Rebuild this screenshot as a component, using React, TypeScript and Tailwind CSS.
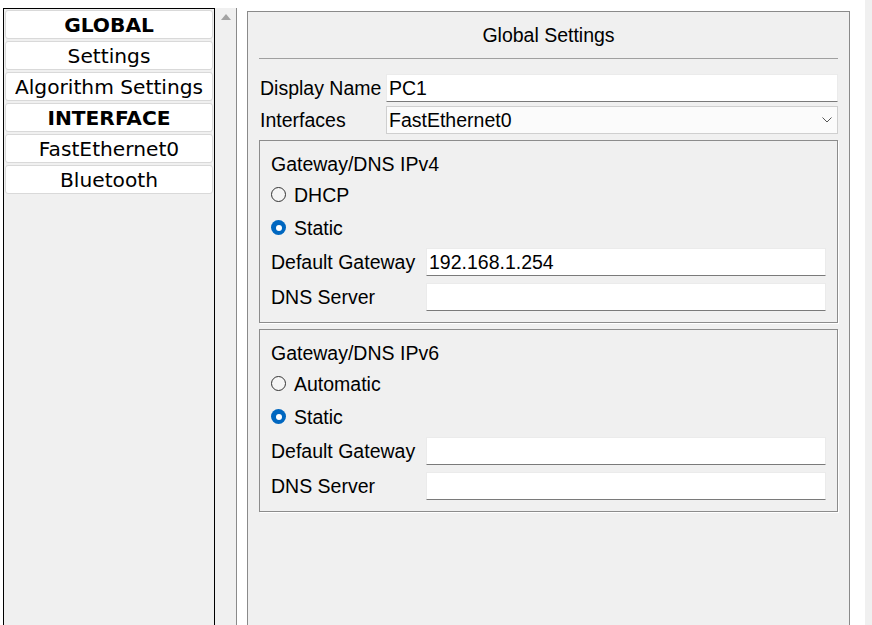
import React from "react";

const sans = { fontFamily: '"Liberation Sans", Arial, sans-serif' };
const verdana = { fontFamily: '"DejaVu Sans", Verdana, sans-serif' };

function NavButton({ label, bold }: { label: string; bold?: boolean }) {
  return (
    <div
      className={`h-[29px] rounded-[3px] border border-[#d9d9d9] bg-white flex items-center justify-center pt-[2px] text-[20.2px] leading-none text-black ${bold ? "font-bold" : ""}`}
      style={verdana}
    >
      {label}
    </div>
  );
}

function TextInput({ value }: { value?: string }) {
  return (
    <div className="flex-1 h-[28px] bg-white border border-[#ebebeb] border-b-[#7a7a7a] flex items-center pl-[2px] pt-[2px] text-[19.5px] leading-none text-black">
      {value}
    </div>
  );
}

function Radio({ checked, label }: { checked?: boolean; label: string }) {
  return (
    <div className="h-[33px] flex items-center">
      {checked ? (
        <div className="w-[15px] h-[15px] rounded-full bg-[#0067c0] flex items-center justify-center">
          <div className="w-[6px] h-[6px] rounded-full bg-white" />
        </div>
      ) : (
        <div className="w-[15px] h-[15px] rounded-full border border-[#333333] bg-[#f5f5f5]" />
      )}
      <span className="ml-[8px] pt-[2px] text-[19.5px] leading-none text-black">{label}</span>
    </div>
  );
}

function GroupBox({ title, opt1, ip }: { title: string; opt1: string; ip?: string }) {
  return (
    <div className="border border-[#8c8c8c] shadow-[1px_1px_0_#ffffff] pl-[11px] pr-[11px] pt-[9px] pb-[11px]">
      <div className="h-[28px] flex items-center pt-[2px] text-[19.5px] leading-none text-black">{title}</div>
      <Radio label={opt1} />
      <Radio label="Static" checked />
      <div className="mt-[4px] h-[28px] flex items-center">
        <div className="w-[155px] pt-[2px] text-[19.5px] leading-none text-black">Default Gateway</div>
        <TextInput value={ip} />
      </div>
      <div className="mt-[7px] h-[28px] flex items-center">
        <div className="w-[155px] pt-[2px] text-[19.5px] leading-none text-black">DNS Server</div>
        <TextInput />
      </div>
    </div>
  );
}

export default function App() {
  return (
    <div className="w-[872px] h-[625px] bg-white flex overflow-hidden" style={sans}>
      {/* Left nav panel */}
      <div className="ml-[3px] mt-[8px] w-[212px] h-[640px] border border-black bg-[#f0f0f0] px-[1px] pt-[1px] flex flex-col gap-[2px] shrink-0">
        <NavButton label="GLOBAL" bold />
        <NavButton label="Settings" />
        <NavButton label="Algorithm Settings" />
        <NavButton label="INTERFACE" bold />
        <NavButton label="FastEthernet0" />
        <NavButton label="Bluetooth" />
      </div>
      {/* Scrollbar */}
      <div className="mt-[8px] w-[22px] h-[640px] bg-[#f0f0f0] border-r border-[#8a8a8a] shrink-0 flex justify-center pt-[6px]">
        <svg width="10" height="6" viewBox="0 0 10 6">
          <polygon points="5,0 10,6 0,6" fill="#a3a3a3" />
        </svg>
      </div>
      {/* Right panel */}
      <div className="ml-[10px] mt-[11px] w-[603px] h-[640px] border border-[#8a8a8a] bg-[#f0f0f0] px-[11px] shrink-0">
        <div className="h-[46px] flex items-center justify-center pt-[2px] text-[19.5px] leading-none text-black">Global Settings</div>
        <div className="h-px bg-[#a0a0a0]" />
        <div className="mt-[15px] h-[28px] flex items-center">
          <div className="w-[127px] pl-[1px] pt-[2px] text-[19.5px] leading-none text-black">Display Name</div>
          <TextInput value="PC1" />
        </div>
        <div className="mt-[4px] h-[28px] flex items-center">
          <div className="w-[127px] pl-[1px] pt-[2px] text-[19.5px] leading-none text-black">Interfaces</div>
          <div className="flex-1 h-[28px] bg-[#fbfbfb] border border-[#cfcfcf] flex items-center pl-[2px] pr-[5px] text-[19.5px] leading-none text-black">
            <span className="flex-1 pt-[2px]">FastEthernet0</span>
            <svg width="10" height="6" viewBox="0 0 10 6" fill="none">
              <polyline points="0.5,0.5 5,5 9.5,0.5" stroke="#555555" strokeWidth="1" />
            </svg>
          </div>
        </div>
        <div className="mt-[6px]">
          <GroupBox title="Gateway/DNS IPv4" opt1="DHCP" ip="192.168.1.254" />
        </div>
        <div className="mt-[6px]">
          <GroupBox title="Gateway/DNS IPv6" opt1="Automatic" />
        </div>
      </div>
      <div className="flex-1" />
      <div className="w-[7px] h-full bg-[#f0f0f0] shrink-0" />
    </div>
  );
}
